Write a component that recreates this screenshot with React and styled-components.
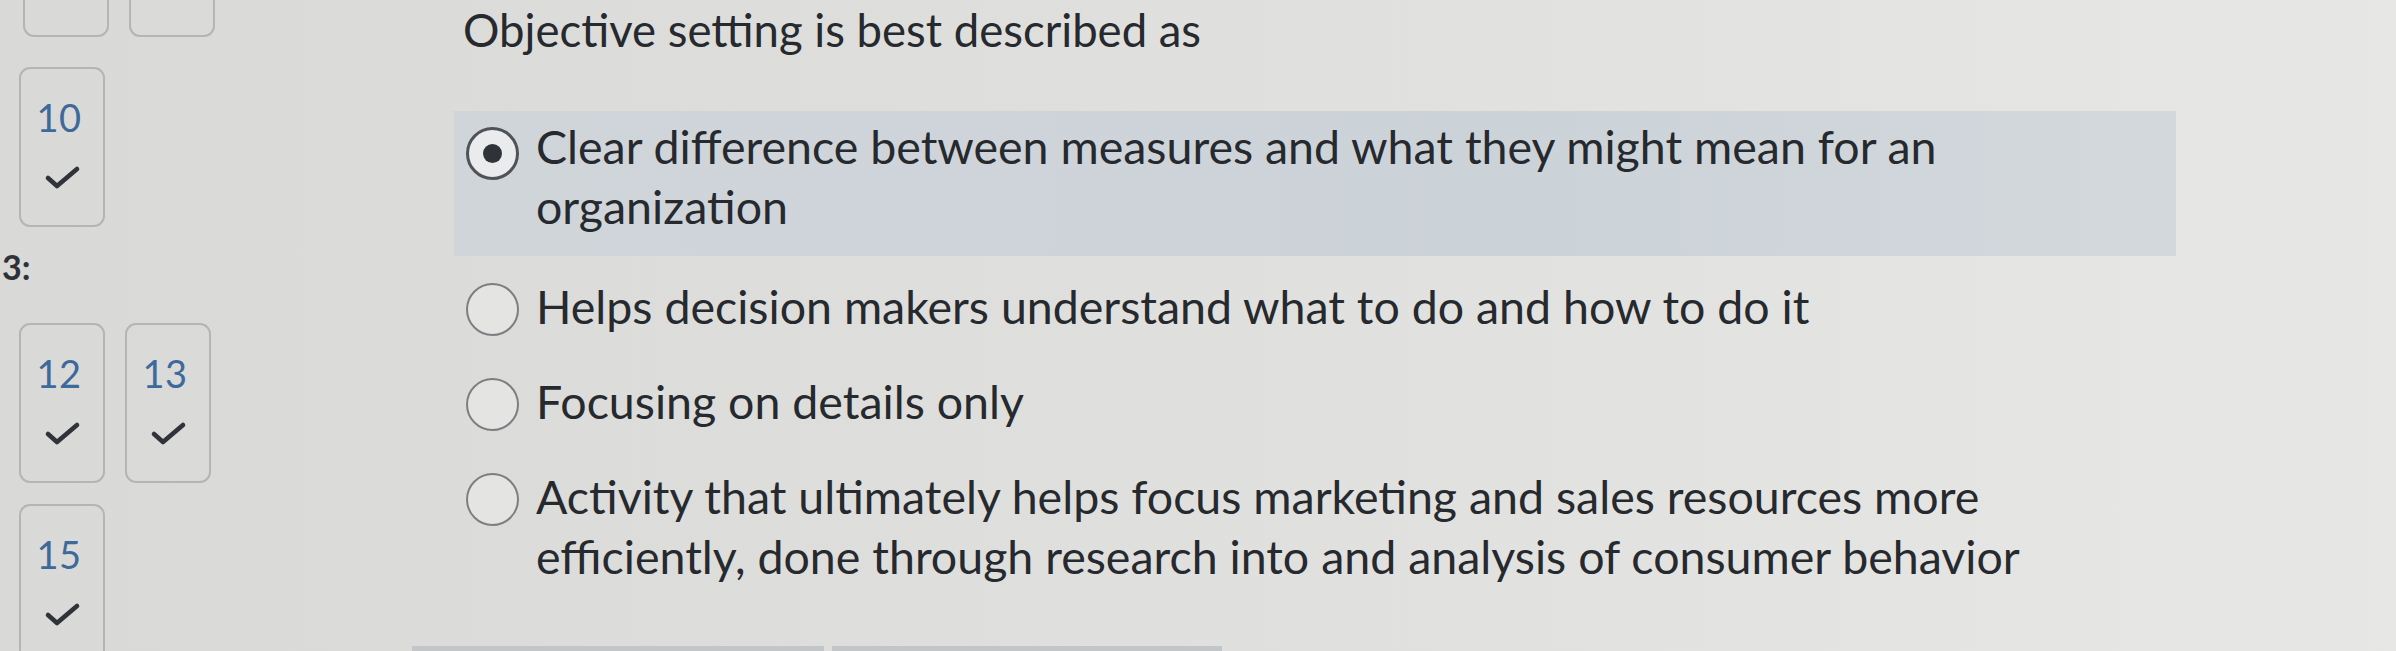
import React from 'react';
import styled, { createGlobalStyle } from 'styled-components';

const GlobalStyle = createGlobalStyle`
  html, body {
    margin: 0;
    padding: 0;
  }
  body {
    width: 2396px;
    height: 651px;
    overflow: hidden;
    font-family: Lato, "Open Sans", "Liberation Sans", sans-serif;
    background: linear-gradient(90deg, #d9d9d7 0%, #dededc 40%, #e3e3e1 75%, #e7e7e5 100%);
    color: #2b2f33;
  }
`;

const Page = styled.div`
  display: grid;
  grid-template-columns: 454px 1722px;
  height: 651px;
  overflow: hidden;
`;

const Sidebar = styled.aside`
  display: flex;
  flex-direction: column;
  margin-top: -123px;
  padding-left: 19px;
`;

const TileRow = styled.div`
  display: flex;
  gap: 20px;
  margin-bottom: ${(p) => p.$after || 22}px;
  padding-left: ${(p) => p.$shift || 0}px;
`;

const Tile = styled.div`
  box-sizing: border-box;
  width: 86px;
  height: 160px;
  border: 2px solid #b4b5b4;
  border-radius: 11px;
  display: flex;
  flex-direction: column;
  align-items: center;
  padding-top: 26px;
  gap: 22px;
`;

const TileNum = styled.span`
  min-height: 44px;
  font-size: 38px;
  line-height: 44px;
  color: #3d699b;
  letter-spacing: 0.5px;
  margin-right: 6px;
`;

const SectionLabel = styled.div`
  font-size: 34px;
  font-weight: 700;
  color: #2e3236;
  margin: 0 0 34px -17px;
  line-height: 44px;
`;

const Main = styled.main`
  display: flex;
  flex-direction: column;
`;

const Question = styled.h2`
  margin: 0 0 51px 9px;
  font-size: 45.5px;
  font-weight: 400;
  line-height: 60px;
  color: #26292d;
`;

const Options = styled.div`
  display: flex;
  flex-direction: column;
  gap: 11px;
`;

const Option = styled.label`
  display: flex;
  align-items: flex-start;
  gap: 17px;
  padding: ${(p) => (p.$selected ? '5px 12px 20px 12px' : '9px 12px 15px 12px')};
  background: ${(p) => (p.$selected ? 'linear-gradient(90deg, #d0d5da, #ccd3d8 60%, #d2d8dc)' : 'transparent')};
`;

const Radio = styled.span`
  flex: none;
  box-sizing: border-box;
  width: 53px;
  height: 53px;
  margin-top: ${(p) => (p.$checked ? 11 : 7)}px;
  border-radius: 50%;
  border: ${(p) => (p.$checked ? '3.5px solid #4f5357' : '2px solid #7c7f82')};
  background: ${(p) => (p.$checked ? '#e9ebec' : '#e4e4e2')};
  display: flex;
  align-items: center;
  justify-content: center;
  &::after {
    content: '';
    display: ${(p) => (p.$checked ? 'block' : 'none')};
    width: 19px;
    height: 19px;
    border-radius: 50%;
    background: #2f3337;
  }
`;

const OptionText = styled.span`
  font-size: 46.5px;
  line-height: 60px;
  max-width: 1560px;
  color: #26292d;
`;

const Footer = styled.div`
  display: flex;
  gap: 8px;
  margin: 45px 0 0 -42px;
`;

const FooterBar = styled.div`
  width: ${(p) => p.$w}px;
  height: 8px;
  background: #c3c6c8;
`;

const Check = () => (
  <svg width="40" height="32" viewBox="0 0 40 32" fill="none">
    <path d="M6 17 L15 25 L35 8" stroke="#303438" strokeWidth="4.6" strokeLinecap="round" strokeLinejoin="round" />
  </svg>
);

const NavTile = ({ num }) => (
  <Tile>
    <TileNum>{num}</TileNum>
    <Check />
  </Tile>
);

const options = [
  { text: 'Clear difference between measures and what they might mean for an organization', selected: true },
  { text: 'Helps decision makers understand what to do and how to do it' },
  { text: 'Focusing on details only' },
  { text: 'Activity that ultimately helps focus marketing and sales resources more efficiently, done through research into and analysis of consumer behavior' },
];

const App = () => (
  <>
    <GlobalStyle />
    <Page>
      <Sidebar>
        <TileRow $after={30} $shift={4}>
          <NavTile />
          <NavTile />
        </TileRow>
        <TileRow $after={18}>
          <NavTile num="10" />
        </TileRow>
        <SectionLabel>3:</SectionLabel>
        <TileRow $after={21} $shift={-4}>
          <NavTile num="12" />
          <NavTile num="13" />
        </TileRow>
        <TileRow $shift={-4}>
          <NavTile num="15" />
        </TileRow>
      </Sidebar>
      <Main>
        <Question>Objective setting is best described as</Question>
        <Options>
          {options.map((o) => (
            <Option key={o.text} $selected={o.selected}>
              <Radio $checked={o.selected} />
              <OptionText>{o.text}</OptionText>
            </Option>
          ))}
        </Options>
        <Footer>
          <FooterBar $w={412} />
          <FooterBar $w={390} />
        </Footer>
      </Main>
    </Page>
  </>
);

export default App;
